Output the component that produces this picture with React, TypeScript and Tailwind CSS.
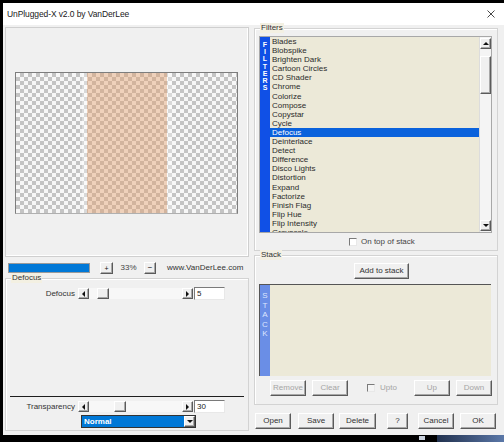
import type { ReactNode } from "react"

const filters = [
  "Blades",
  "Blobspike",
  "Brighten Dark",
  "Cartoon Circles",
  "CD Shader",
  "Chrome",
  "Colorize",
  "Compose",
  "Copystar",
  "Cycle",
  "Defocus",
  "Deinterlace",
  "Detect",
  "Difference",
  "Disco Lights",
  "Distortion",
  "Expand",
  "Factorize",
  "Finish Flag",
  "Flip Hue",
  "Flip Intensity",
  "Grayscale",
]

const raised =
  "border border-t-white border-l-white border-r-[#5a5a5a] border-b-[#5a5a5a] shadow-[inset_-1px_-1px_0_#a8a8a8] bg-[#f0f0f0]"
const sunken = "border border-t-[#7a7a7a] border-l-[#7a7a7a] border-r-[#e8e8e8] border-b-[#e8e8e8]"

function Arrow({ dir, className = "" }: { dir: "left" | "right" | "up" | "down"; className?: string }) {
  const pts = {
    left: "3,0 3,6 0,3",
    right: "0,0 0,6 3,3",
    up: "0,3 6,3 3,0",
    down: "0,0 6,0 3,3",
  }[dir]
  const vertical = dir === "up" || dir === "down"
  return (
    <svg width={vertical ? 6 : 3} height={vertical ? 3 : 6} className={className}>
      <polygon points={pts} fill="#111" />
    </svg>
  )
}

function SmallBtn({ children, className = "" }: { children: ReactNode; className?: string }) {
  return <div className={`${raised} flex items-center justify-center ${className}`}>{children}</div>
}

function Button({ label, disabled, className = "" }: { label: string; disabled?: boolean; className?: string }) {
  return (
    <div
      className={`${raised} flex items-center justify-center h-[16px] text-[8px] ${
        disabled ? "text-[#a5a5a5]" : "text-[#333]"
      } ${className}`}
    >
      {label}
    </div>
  )
}

function Group({ label, className = "", children }: { label: string; className?: string; children: ReactNode }) {
  return (
    <div className={`relative border border-[#d3d3d3] shadow-[inset_1px_1px_0_#fff] ${className}`}>
      <span className="absolute -top-[6px] left-[5px] bg-[#f3f0e2] px-px text-[8px] leading-[10px] text-[#333]">
        {label}
      </span>
      {children}
    </div>
  )
}

function Slider({ thumb, value }: { thumb: number; value: string }) {
  return (
    <div className="flex items-center">
      <SmallBtn className="w-[11px] h-[11px]">
        <Arrow dir="left" />
      </SmallBtn>
      <div className="relative w-[93px] h-[11px] bg-[#f7f7f7]">
        <div className={`absolute top-0 ${raised} w-[12px] h-[11px]`} style={{ left: thumb }} />
      </div>
      <SmallBtn className="w-[11px] h-[11px]">
        <Arrow dir="right" />
      </SmallBtn>
      <div className={`ml-[1px] w-[31px] h-[13px] bg-white ${sunken} border-r-[#7a7a7a] text-[8px] leading-[11px] pl-[2px] text-[#222]`}>
        {value}
      </div>
    </div>
  )
}

export default function App() {
  return (
    <div className="w-[504px] h-[442px] bg-black pt-[3px] pl-[3px] overflow-hidden font-['Liberation_Sans',Arial,sans-serif]">
      <div className="w-[501px] h-[432px] bg-[#f0f0f0] flex flex-col">
        {/* title bar */}
        <div className="h-[22px] bg-white flex items-center justify-between pl-[4px] pr-[9px] shrink-0">
          <span className="text-[8.5px] text-[#1a1a1a] tracking-[-0.1px]">UnPlugged-X v2.0 by VanDerLee</span>
          <svg width="8" height="8" viewBox="0 0 8 8">
            <path d="M0.5 0.5 L7.5 7.5 M7.5 0.5 L0.5 7.5" stroke="#333" strokeWidth="0.9" />
          </svg>
        </div>

        <div className="flex pl-[2px] pt-[2px]">
          {/* left column */}
          <div className="w-[244px] flex flex-col">
            <div className="h-[230px] border border-[#cfcfcf] shadow-[inset_-1px_-1px_0_#fff]">
              <div className="mt-[44px] ml-[9px] w-[223px] h-[142px] border border-[#7d7d7d] border-b-[#b0b0b0] bg-[conic-gradient(#c4c4c4_25%,#f7f7f7_0_50%,#c4c4c4_0_75%,#f7f7f7_0)] bg-[length:8px_8px] flex">
                <div className="w-[66px]" />
                <div className="w-[5px] bg-white/35" />
                <div className="w-[80px] bg-[#e4a271]/45" />
                <div className="w-[5px] bg-white/35" />
              </div>
            </div>

            <div className="mt-[5px] h-[12px] flex items-center">
              <div className="ml-[3px] w-[82px] h-[10px] bg-[#0078d7] border border-[#9a9a9a]" />
              <SmallBtn className="ml-[10px] w-[13px] h-[12px]">
                <span className="text-[7px] leading-none text-[#111]">+</span>
              </SmallBtn>
              <span className="w-[31px] text-center text-[8px] text-[#444]">33%</span>
              <SmallBtn className="w-[12px] h-[12px]">
                <span className="text-[8px] leading-none text-[#111]">−</span>
              </SmallBtn>
              <span className="ml-[11px] text-[8px] text-[#333]">www.VanDerLee.com</span>
            </div>

            <Group label="Defocus" className="mt-[4px] h-[153px] flex flex-col">
              <div className="mt-[8px] flex items-center">
                <span className="w-[72px] pr-[3px] text-right text-[8px] text-[#333]">Defocus</span>
                <Slider thumb={8} value="5" />
              </div>
              <div className="mt-[96px] mx-[4px] h-px bg-[#1e1e1e]" />
              <div className="mt-[3px] flex items-center">
                <span className="w-[72px] pr-[3px] text-right text-[8px] text-[#333]">Transparency</span>
                <Slider thumb={25} value="30" />
              </div>
              <div className="mt-[2px] ml-[75px] w-[115px] h-[13px] border border-[#333] bg-[#0078d7] flex items-center">
                <span className="flex-1 pl-[2px] text-[8px] font-bold text-white leading-none">Normal</span>
                <SmallBtn className="w-[11px] h-[11px]">
                  <Arrow dir="down" />
                </SmallBtn>
              </div>
            </Group>
          </div>

          {/* right column */}
          <div className="ml-[5px] w-[244px] flex flex-col">
            <Group label="Filters" className="mt-[1px] h-[223px] pl-[4px] pt-[7px]">
              <div className="w-[233px] h-[197px] border border-[#a8a8a8] flex">
                <div className="w-[10px] bg-[#1050e6] flex flex-col items-center pt-[4px]">
                  {"FILTERS".split("").map((c, i) => (
                    <span key={i} className="h-[7.2px] text-[7px] font-bold text-white leading-[7.2px]">
                      {c}
                    </span>
                  ))}
                </div>
                <div className="flex-1 bg-[#ece9d8] overflow-hidden">
                  {filters.map((f) => (
                    <div
                      key={f}
                      className={`h-[9.1px] pl-[2px] text-[8px] leading-[9.1px] ${
                        f === "Defocus" ? "bg-[#0a62dc] text-white" : "text-[#2b2b2b]"
                      }`}
                    >
                      {f}
                    </div>
                  ))}
                </div>
                <div className="w-[12px] bg-[#f4f4f4] flex flex-col border-l border-[#dcdcdc]">
                  <SmallBtn className="h-[11px] mt-px">
                    <Arrow dir="up" />
                  </SmallBtn>
                  <div className={`${raised} mt-[7px] h-[38px]`} />
                  <div className="flex-1" />
                  <SmallBtn className="h-[11px] mb-px">
                    <Arrow dir="down" />
                  </SmallBtn>
                </div>
              </div>
              <div className="mt-[3px] ml-[90px] flex items-center">
                <div className={`w-[8px] h-[8px] bg-white ${sunken}`} />
                <span className="ml-[4px] text-[8px] text-[#444]">On top of stack</span>
              </div>
            </Group>

            <Group label="Stack" className="mt-[4px] h-[150px] pl-[4px] pt-[7px]">
              <Button label="Add to stack" className="ml-[95px] w-[55px]" />
              <div className="mt-[5px] w-[232px] h-[92px] flex border-t border-l border-[#555]">
                <div className="w-[10px] bg-[#6a8ee6] flex flex-col items-center pt-[6px]">
                  {"STACK".split("").map((c, i) => (
                    <span key={i} className="text-[8px] text-[#dde6ff] leading-[9.5px]">
                      {c}
                    </span>
                  ))}
                </div>
                <div className="flex-1 bg-[#ece9d8]" />
              </div>
              <div className="mt-[4px] flex items-center">
                <Button label="Remove" disabled className="ml-[11px] w-[36px]" />
                <Button label="Clear" disabled className="ml-[6px] w-[36px]" />
                <div className={`ml-[19px] w-[8px] h-[8px] bg-[#f4f4f4] ${sunken}`} />
                <span className="ml-[5px] text-[8px] text-[#a5a5a5]">Upto</span>
                <Button label="Up" disabled className="ml-[17px] w-[36px]" />
                <Button label="Down" disabled className="ml-[6px] w-[36px]" />
              </div>
            </Group>

            <div className="mt-[8px] flex">
              <Button label="Open" className="ml-px w-[36px]" />
              <Button label="Save" className="ml-[7px] w-[36px]" />
              <Button label="Delete" className="ml-[5px] w-[37px]" />
              <Button label="?" className="ml-[11px] w-[21px]" />
              <Button label="Cancel" className="ml-[10px] w-[36px]" />
              <Button label="OK" className="ml-[6px] w-[36px]" />
            </div>
          </div>
        </div>
      </div>
      <div className="flex h-[7px]">
        <div className="ml-[416px] w-[6px] h-[4px] mt-[1px] bg-[#c8d0dc]" />
        <div className="ml-[12px] flex-1 bg-gradient-to-r from-[#22324f] to-[#5b78a8]" />
      </div>
    </div>
  )
}
